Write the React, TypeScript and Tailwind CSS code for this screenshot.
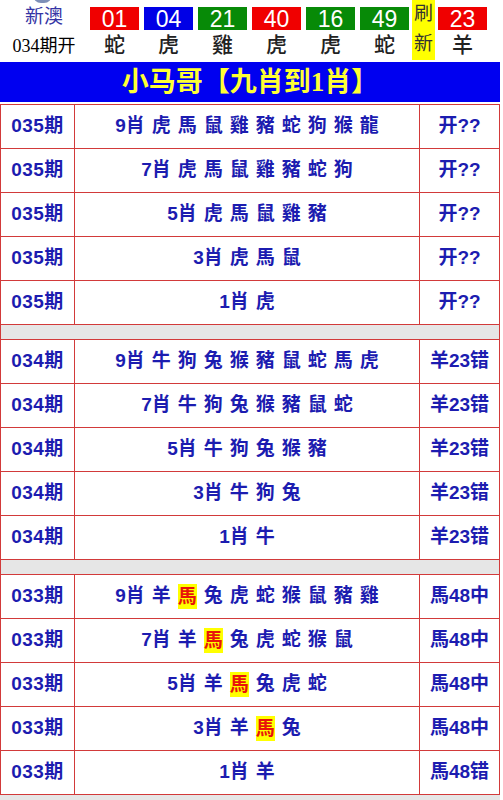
const balls = [
  { n: "01", z: "蛇", c: "bg-[#f00000]" },
  { n: "04", z: "虎", c: "bg-[#0000e6]" },
  { n: "21", z: "雞", c: "bg-[#078a07]" },
  { n: "40", z: "虎", c: "bg-[#f00000]" },
  { n: "16", z: "虎", c: "bg-[#078a07]" },
  { n: "49", z: "蛇", c: "bg-[#078a07]" },
];

const groups = [
  {
    issue: "035期",
    result: ["开??"],
    rows: [
      "9肖 虎 馬 鼠 雞 豬 蛇 狗 猴 龍",
      "7肖 虎 馬 鼠 雞 豬 蛇 狗",
      "5肖 虎 馬 鼠 雞 豬",
      "3肖 虎 馬 鼠",
      "1肖 虎",
    ],
    hit: "",
  },
  {
    issue: "034期",
    result: ["羊23错"],
    rows: [
      "9肖 牛 狗 兔 猴 豬 鼠 蛇 馬 虎",
      "7肖 牛 狗 兔 猴 豬 鼠 蛇",
      "5肖 牛 狗 兔 猴 豬",
      "3肖 牛 狗 兔",
      "1肖 牛",
    ],
    hit: "",
  },
  {
    issue: "033期",
    result: ["馬48中", "馬48中", "馬48中", "馬48中", "馬48错"],
    rows: [
      "9肖 羊 馬 兔 虎 蛇 猴 鼠 豬 雞",
      "7肖 羊 馬 兔 虎 蛇 猴 鼠",
      "5肖 羊 馬 兔 虎 蛇",
      "3肖 羊 馬 兔",
      "1肖 羊",
    ],
    hit: "馬",
  },
];

const sans = "font-['Liberation_Sans','Noto_Sans_CJK_SC',sans-serif]";

function Row({ issue, text, result, hit }: { issue: string; text: string; result: string; hit: string }) {
  const parts = text.split(" ");
  return (
    <div className="flex h-[44px] border-b border-[#d23a3a] text-[19px] font-bold text-[#1c1cb0]">
      <div className="w-[74px] shrink-0 border-r border-[#d23a3a] flex items-center justify-center tracking-[0.5px]">
        {issue}
      </div>
      <div className="w-[345px] shrink-0 border-r border-[#d23a3a] flex items-center justify-center gap-[7px]">
        {parts.map((p, i) =>
          p === hit ? (
            <span key={i} className="bg-[#ffff00] text-[#e8140a] leading-[25px]">
              {p}
            </span>
          ) : (
            <span key={i}>{p}</span>
          )
        )}
      </div>
      <div className="flex-1 flex items-center justify-center">{result}</div>
    </div>
  );
}

export default function App() {
  return (
    <div className={`w-[503px] h-[800px] bg-white overflow-hidden ${sans}`}>
      {/* top draw bar */}
      <div className="relative flex h-[62px]">
        <div className="absolute left-[33px] top-[-13px] w-[19px] h-[16px] rounded-full bg-[#7d8fb8]" />
        <div className="w-[88px] shrink-0 flex flex-col items-center pt-[5px]">
          <div className="text-[19px] leading-[24px] text-[#3535a5]">新澳</div>
          <div className="mt-[6px] text-[18px] leading-[22px] text-black font-['Liberation_Serif','Noto_Sans_CJK_SC',serif]">
            034期开
          </div>
        </div>
        <div className="flex gap-[5px] pl-[2px]">
          {balls.map((b) => (
            <div key={b.n} className="w-[49px] flex flex-col items-center pt-[7px]">
              <div className={`w-[49px] h-[23px] ${b.c} text-white text-[23px] leading-[24px] text-center`}>
                {b.n}
              </div>
              <div className="mt-[2px] text-[21px] leading-[26px] text-[#222] font-medium">{b.z}</div>
            </div>
          ))}
        </div>
        <div className="ml-[3px] w-[23px] h-[60px] bg-[#ffff00] flex flex-col items-center text-[19px] leading-[22px] text-[#333] pt-[3px]">
          <span>刷</span>
          <span className="mt-[8px]">新</span>
        </div>
        <div className="ml-[3px] w-[49px] flex flex-col items-center pt-[7px]">
          <div className="w-[49px] h-[23px] bg-[#f00000] text-white text-[23px] leading-[24px] text-center">23</div>
          <div className="mt-[2px] text-[21px] leading-[26px] text-[#222] font-medium">羊</div>
        </div>
      </div>

      {/* title */}
      <div className="w-[500px] h-[40px] bg-[#0000f0] flex items-center justify-center text-[#ffff33] text-[27px] font-bold font-['Liberation_Serif','Noto_Sans_CJK_SC',serif]">
        小马哥【九肖到1肖】
      </div>

      {/* table */}
      <div className="mt-[2px] w-[500px] border-l border-r border-t border-[#d23a3a]">
        {groups.map((g, gi) => (
          <div key={g.issue}>
            {g.rows.map((r, ri) => (
              <Row
                key={ri}
                issue={g.issue}
                text={r}
                result={g.result[Math.min(ri, g.result.length - 1)]}
                hit={g.hit}
              />
            ))}
            {gi < groups.length - 1 && <div className="h-[15px] bg-[#e6e6e6] border-b border-[#d23a3a]" />}
          </div>
        ))}
      </div>
      <div className="w-[500px] h-[10px] bg-[#e6e6e6]" />
    </div>
  );
}
